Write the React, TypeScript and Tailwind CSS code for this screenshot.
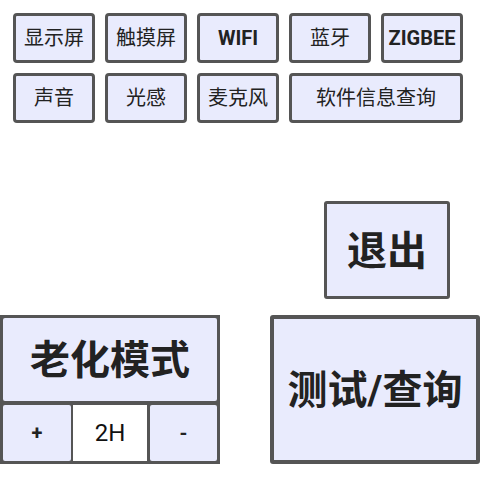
import React from 'react';

const topRow = ['显示屏', '触摸屏', 'WIFI', '蓝牙', 'ZIGBEE'];
const secondRow = ['声音', '光感', '麦克风'];

function SmallBtn({ label, wide }: { label: string; wide?: boolean }) {
  const latin = /^[A-Z]+$/.test(label);
  return (
    <button
      className={`h-[50px] ${wide ? 'w-[174px]' : 'w-[82px]'} flex items-center justify-center rounded-[4px] border-[3px] border-[#555555] bg-[#e9ebfd] text-[20px] text-[#222222] ${
        latin ? 'font-bold' : 'font-normal'
      }`}
    >
      {label}
    </button>
  );
}

export default function App() {
  return (
    <div
      className="w-[480px] h-[480px] bg-white overflow-hidden"
      style={{ fontFamily: 'Roboto, "Noto Sans CJK SC", sans-serif' }}
    >
      <div className="flex flex-col gap-[10px] pl-[13px] pt-[13px]">
        <div className="flex gap-[10px]">
          {topRow.map((t) => (
            <SmallBtn key={t} label={t} />
          ))}
        </div>
        <div className="flex gap-[10px]">
          {secondRow.map((t) => (
            <SmallBtn key={t} label={t} />
          ))}
          <SmallBtn label="软件信息查询" wide />
        </div>
      </div>

      <div className="flex justify-end pr-[30px] pt-[78px]">
        <button className="w-[126px] h-[98px] flex items-center justify-center pt-[3px] rounded-[3px] border-[3px] border-[#555555] bg-[#e9ebfd] text-[40px] font-bold text-[#222222]">
          退出
        </button>
      </div>

      <div className="flex justify-between pt-[16px]">
        <div className="w-[220px] h-[149px] bg-[#555555] p-[3px] flex flex-col gap-[4px]">
          <div className="h-[83px] pt-[3px] rounded-[2px] bg-[#e9ebfd] flex items-center justify-center text-[40px] font-bold text-[#222222]">
            老化模式
          </div>
          <div className="flex-1 flex gap-[2px]">
            <button className="w-[68px] rounded-[2px] bg-[#e9ebfd] flex items-center justify-center text-[20px] font-bold text-[#222222]">
              +
            </button>
            <div className="w-[74px] bg-white flex items-center justify-center text-[24px] text-[#111111]">
              2H
            </div>
            <button className="ml-[1px] flex-1 rounded-[2px] bg-[#e9ebfd] flex items-center justify-center text-[20px] font-bold text-[#222222]">
              -
            </button>
          </div>
        </div>
        <button className="w-[210px] h-[149px] flex items-center justify-center pt-[3px] rounded-[3px] border-[4px] border-[#555555] bg-[#e9ebfd] text-[40px] font-bold text-[#222222]">
          测试/查询
        </button>
      </div>
    </div>
  );
}
